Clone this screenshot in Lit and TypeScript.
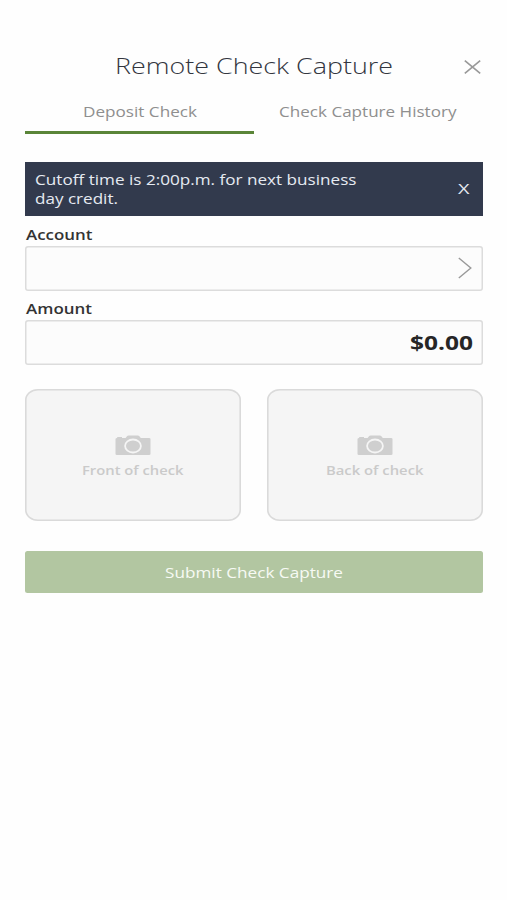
import { LitElement, html, svg, css } from "lit";
import { customElement, property } from "lit/decorators.js";

/** One line of extended-width text, fitted to a given run length. */
@customElement("wide-text")
class WideText extends LitElement {
  @property() text = "";
  @property({ type: Number }) run = 100;
  @property({ type: Number }) base = 14;

  static styles = css`
    :host { display: block; flex: none; }
    svg { display: block; overflow: visible; height: 19px; }
    text { fill: currentColor; }
  `;

  render() {
    return html`<svg width=${this.run} height="19">
      ${svg`<text x="0" y=${this.base} textLength=${this.run} lengthAdjust="spacingAndGlyphs">${this.text}</text>`}
    </svg>`;
  }
}

@customElement("check-photo")
class CheckPhoto extends LitElement {
  @property() label = "";
  @property({ type: Number }) run = 100;

  static styles = css`
    :host {
      display: flex; flex-direction: column; align-items: center;
      box-sizing: border-box; height: 132.5px; padding-top: 46px;
      box-shadow: inset 0 0 0 1.6px #dadada;
      border-radius: 13px / 11px; background: #f5f5f5;
      color: #cacaca; font-size: 13px; font-weight: 600;
    }
    svg { display: block; }
    wide-text { margin-top: 4px; }
  `;

  render() {
    return html`
      <svg width="36" height="21" viewBox="0 0 36 21">
        <path fill="#cfcfcf" d="M2.2 2.9V2.1H7V2.9H10.6L12 1.2Q12.5 .5 13.6 .5H22.8Q23.9 .5 24.4 1.2L25.8 2.9H34Q35.5 2.9 35.5 4.1V18.9Q35.5 20 34 20H2Q.5 20 .5 18.9V4.1Q.5 2.9 2.2 2.9Z"/>
        <ellipse cx="18" cy="11" rx="7.9" ry="6.5" fill="none" stroke="#f5f5f5" stroke-width="1.8"/>
      </svg>
      <wide-text .text=${this.label} .run=${this.run} .base=${14.5}></wide-text>
    `;
  }
}

@customElement("app-root")
class AppRoot extends LitElement {
  static styles = css`
    :host {
      display: block; box-sizing: border-box; height: 900px; padding: 53px 24.5px 0 25.3px;
      background: #fefefe; overflow: hidden;
      font-family: "Open Sans", "Noto Sans", sans-serif; font-size: 14.3px; color: #333;
    }
    header { display: grid; grid-template-columns: 1fr auto 1fr; height: 46px; }
    .title { grid-column: 2; font-size: 22.3px; font-weight: 300; color: #33363f; }
    .close { justify-self: end; margin: 7px 2px 0 0; }
    nav { display: grid; grid-template-columns: 1fr 1fr; height: 34px; color: #8f8f8f; }
    .tab { display: flex; justify-content: center; padding-top: 4px; border-bottom: 3px solid transparent; height: 27.5px; }
    .tab.on { border-color: #5a8538; }
    .banner {
      display: flex; align-items: center; justify-content: space-between; box-sizing: border-box;
      height: 54.5px; margin-top: 28.5px; padding: 0 13.5px 0 10px;
      background: #323a4d; color: #e6eaf2;
    }
    .cross { font-size: 14.8px; }
    .label { height: 30px; padding-top: 10px; box-sizing: border-box; font-weight: 600; font-size: 14px; color: #333; }
    .label wide-text { margin-left: .5px; }
    .field {
      display: flex; align-items: center; justify-content: flex-end; box-sizing: border-box;
      height: 44.5px; padding-right: 11px; box-shadow: inset 0 0 0 1.5px #dcdcdc; border-radius: 3px; background: #fcfcfc;
    }
    .label.second { height: 29.5px; }
    .amount { padding-right: 10px; font-size: 20px; font-weight: 700; color: #262626; }
    .photos { display: grid; grid-template-columns: 1fr 1fr; gap: 26px; margin-top: 24px; }
    .submit {
      display: flex; align-items: center; justify-content: center;
      height: 42px; margin-top: 30.3px; border-radius: 2.5px; background: #b2c6a1; color: #f7faf4;
    }
  `;

  render() {
    return html`
      <header>
        <wide-text class="title" .text=${"Remote Check Capture"} .run=${278} .base=${20.6}></wide-text>
        <svg class="close" width="17" height="14" viewBox="0 0 17 14">
          <path d="M.8 .6L16.2 13.4M16.2 .6L.8 13.4" stroke="#999" stroke-width="1.6" fill="none"/>
        </svg>
      </header>
      <nav>
        <div class="tab on"><wide-text .text=${"Deposit Check"} .run=${114} .base=${14.2}></wide-text></div>
        <div class="tab"><wide-text .text=${"Check Capture History"} .run=${177.5} .base=${14.2}></wide-text></div>
      </nav>
      <div class="banner">
        <div>
          <wide-text .text=${"Cutoff time is 2:00p.m. for next business"} .run=${321.5} .base=${15}></wide-text>
          <wide-text .text=${"day credit."} .run=${83} .base=${15}></wide-text>
        </div>
        <wide-text class="cross" .text=${"X"} .run=${11.5} .base=${15}></wide-text>
      </div>
      <div class="label"><wide-text .text=${"Account"} .run=${66.5} .base=${13.6}></wide-text></div>
      <div class="field">
        <svg width="14" height="22" viewBox="0 0 14 22">
          <path d="M.8 1L12.8 11L.8 21" fill="none" stroke="#999" stroke-width="1.4"/>
        </svg>
      </div>
      <div class="label second"><wide-text .text=${"Amount"} .run=${66} .base=${13}></wide-text></div>
      <div class="field amount"><wide-text .text=${"$0.00"} .run=${63} .base=${17}></wide-text></div>
      <div class="photos">
        <check-photo .label=${"Front of check"} .run=${101.5}></check-photo>
        <check-photo .label=${"Back of check"} .run=${97.5}></check-photo>
      </div>
      <div class="submit"><wide-text .text=${"Submit Check Capture"} .run=${178} .base=${15}></wide-text></div>
    `;
  }
}
